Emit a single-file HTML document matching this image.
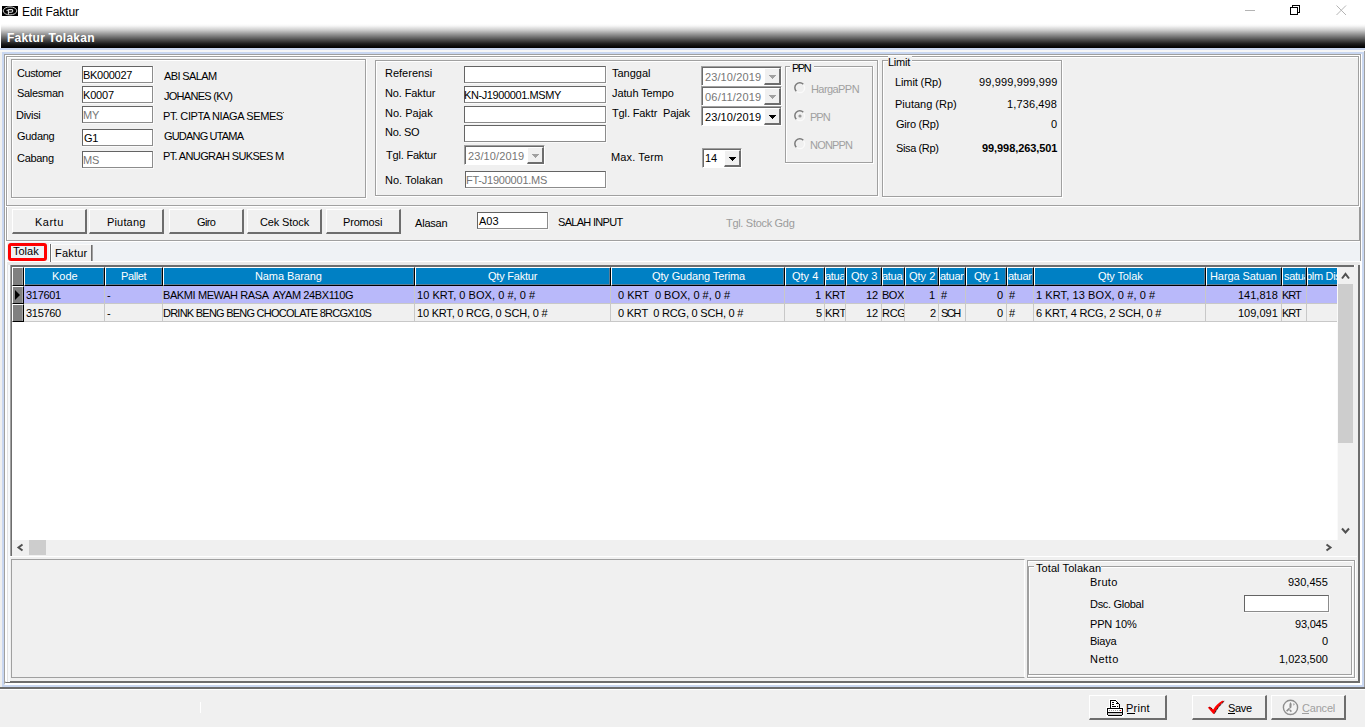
<!DOCTYPE html>
<html><head><meta charset="utf-8"><title>Edit Faktur</title>
<style>
html,body{margin:0;padding:0;}
body{width:1365px;height:727px;overflow:hidden;position:relative;background:#f0f0f0;font-family:"Liberation Sans",sans-serif;font-size:11px;color:#000;}
body div{position:absolute;white-space:nowrap;}
svg{display:block}
</style></head><body>
<div style="left:0px;top:0px;width:1365px;height:24px;background:#fff"></div>
<svg style="position:absolute;left:2px;top:6px" width="16" height="10" viewBox="0 0 16 10"><rect width="16" height="10" fill="#000"/><ellipse cx="8" cy="4.9" rx="6.8" ry="4" fill="none" stroke="#d0d0d0" stroke-width="1"/><path d="M4.6 4.6 L6.4 4 L6.4 8.6 M6.4 3.6 H9.8 Q11 3.8 10.6 5.4 Q10.2 6.4 8.6 6.2 H6.6" fill="none" stroke="#e0e0e0" stroke-width="1.1"/></svg>
<div style="left:22px;top:5px;font-size:12px;line-height:15px;letter-spacing:-0.1px;color:#000;white-space:pre;">Edit Faktur</div>
<div style="left:1245px;top:10px;width:10px;height:1px;background:#b4b4b4"></div>
<svg style="position:absolute;left:1289px;top:4px" width="13" height="12" viewBox="0 0 13 12" shape-rendering="crispEdges"><rect x="1.5" y="3.5" width="7" height="7" fill="none" stroke="#000" stroke-width="1"/><path d="M3.5 3.5 V1.5 H10.5 V8.5 H8.5" fill="none" stroke="#000" stroke-width="1"/></svg>
<svg style="position:absolute;left:1336px;top:5px" width="11" height="11" viewBox="0 0 11 11"><path d="M0.5 0.5 L10 10 M10 0.5 L0.5 10" stroke="#b4b4b4" stroke-width="1"/></svg>
<div style="left:0px;top:24px;width:1px;height:24px;background:#fff"></div>
<div style="left:1px;top:24px;width:1364px;height:24px;background:linear-gradient(to bottom,#ffffff 0%,#f6f6f6 8%,#cdcdcd 25%,#8e8e8e 45%,#505050 65%,#1e1e1e 82%,#080808 94%,#000 100%)"></div>
<div style="left:7px;top:31px;font-size:12px;line-height:15px;letter-spacing:0.231px;color:#fff;white-space:pre;font-weight:bold;">Faktur Tolakan</div>
<div style="left:0px;top:48px;width:1365px;height:2px;background:#c9d7f1"></div>
<div style="left:0px;top:50px;width:1365px;height:2px;background:#f6f6f6"></div>
<div style="left:2px;top:52px;width:1362px;height:635px;border-top:2px solid #c9d7f1;border-left:2px solid #c9d7f1;border-bottom:2px solid #c9d7f1;border-right:2px solid #c9d7f1;box-sizing:border-box"></div>
<div style="left:1364px;top:51px;width:1px;height:637px;background:#a0a0a0"></div>
<div style="left:0px;top:687px;width:1365px;height:2px;background:#6d6d6d"></div>
<div style="left:0px;top:689px;width:1365px;height:1px;background:#fff"></div>
<div style="left:4px;top:54px;width:1358px;height:631px;border-top:1px solid #a0a0a0;border-left:1px solid #a0a0a0;border-bottom:2px solid #fff;border-right:1px solid #fff;box-sizing:border-box"></div>
<div style="left:5px;top:55px;width:1356px;height:628px;border-top:1px solid #fff;border-left:1px solid #fff;border-bottom:2px solid #6d6d6d;box-sizing:border-box"></div>
<div style="left:1360px;top:54px;width:1px;height:153px;background:#a0a0a0"></div>
<div style="left:1361px;top:54px;width:1px;height:153px;background:#fff"></div>
<div style="left:1359px;top:56px;width:1px;height:151px;background:#fff"></div>
<div style="left:1359px;top:207px;width:2px;height:54px;background:#999"></div>
<div style="left:1361px;top:207px;width:1px;height:54px;background:#fff"></div>
<div style="left:1358px;top:261px;width:2px;height:422px;background:#6d6d6d"></div>
<div style="left:1360px;top:261px;width:2px;height:424px;background:#fff"></div>
<div style="left:6px;top:56px;width:1353px;height:185px;border-top:1px solid #a0a0a0;border-left:1px solid #a0a0a0;box-sizing:border-box"></div>
<div style="left:7px;top:57px;width:1352px;height:184px;border-top:1px solid #fff;border-left:1px solid #fff;box-sizing:border-box"></div>
<div style="left:6px;top:241px;width:1px;height:441px;background:#fff"></div>
<div style="left:7px;top:262px;width:1px;height:420px;background:#e3e3e3"></div>
<div style="left:8px;top:262px;width:2px;height:420px;background:#f7f9fc"></div>
<div style="left:6px;top:205px;width:1353px;height:1px;background:#a0a0a0"></div>
<div style="left:6px;top:206px;width:1353px;height:1px;background:#fff"></div>
<div style="left:1358px;top:56px;width:1px;height:150px;background:#a0a0a0"></div>
<div style="left:11px;top:59px;width:355px;height:139px;border:1px solid #a0a0a0;box-sizing:border-box"></div>
<div style="left:12px;top:60px;width:353px;height:137px;border-top:1px solid #fff;border-left:1px solid #fff;box-sizing:border-box"></div>
<div style="left:11px;top:198px;width:356px;height:1px;background:#fff"></div>
<div style="left:366px;top:59px;width:1px;height:140px;background:#fff"></div>
<div style="left:17px;top:67px;font-size:11px;line-height:13px;letter-spacing:-0.429px;color:#000;white-space:pre;">Customer</div>
<div style="left:17px;top:87px;font-size:11px;line-height:13px;letter-spacing:-0.3px;color:#000;white-space:pre;">Salesman</div>
<div style="left:16px;top:109px;font-size:11px;line-height:13px;letter-spacing:-0.3px;color:#000;white-space:pre;">Divisi</div>
<div style="left:17px;top:130px;font-size:11px;line-height:13px;letter-spacing:-0.3px;color:#000;white-space:pre;">Gudang</div>
<div style="left:17px;top:152px;font-size:11px;line-height:13px;letter-spacing:-0.3px;color:#000;white-space:pre;">Cabang</div>
<div style="left:82px;top:66px;width:71px;height:17px;background:#fff;border-top:1px solid #646464;border-left:1px solid #646464;border-right:1px solid #8c8c8c;border-bottom:1px solid #8c8c8c;box-sizing:border-box"></div>
<div style="left:153px;top:66px;width:1px;height:18px;background:#fafafa"></div>
<div style="left:82px;top:83px;width:71px;height:1px;background:#fafafa"></div>
<div style="left:83px;top:69px;font-size:11px;line-height:13px;letter-spacing:-0.286px;color:#000;white-space:pre;">BK000027</div>
<div style="left:82px;top:86px;width:71px;height:17px;background:#fff;border-top:1px solid #646464;border-left:1px solid #646464;border-right:1px solid #8c8c8c;border-bottom:1px solid #8c8c8c;box-sizing:border-box"></div>
<div style="left:153px;top:86px;width:1px;height:18px;background:#fafafa"></div>
<div style="left:82px;top:103px;width:71px;height:1px;background:#fafafa"></div>
<div style="left:83px;top:89px;font-size:11px;line-height:13px;letter-spacing:-0.2px;color:#000;white-space:pre;">K0007</div>
<div style="left:82px;top:106px;width:71px;height:17px;background:#fff;border-top:1px solid #646464;border-left:1px solid #646464;border-right:1px solid #8c8c8c;border-bottom:1px solid #8c8c8c;box-sizing:border-box"></div>
<div style="left:153px;top:106px;width:1px;height:18px;background:#fafafa"></div>
<div style="left:82px;top:123px;width:71px;height:1px;background:#fafafa"></div>
<div style="left:83px;top:109px;font-size:11px;line-height:13px;letter-spacing:-0.2px;color:#767676;white-space:pre;">MY</div>
<div style="left:82px;top:129px;width:71px;height:17px;background:#fff;border-top:1px solid #646464;border-left:1px solid #646464;border-right:1px solid #8c8c8c;border-bottom:1px solid #8c8c8c;box-sizing:border-box"></div>
<div style="left:153px;top:129px;width:1px;height:18px;background:#fafafa"></div>
<div style="left:82px;top:146px;width:71px;height:1px;background:#fafafa"></div>
<div style="left:84px;top:132px;font-size:11px;line-height:13px;letter-spacing:-0.2px;color:#000;white-space:pre;">G1</div>
<div style="left:82px;top:151px;width:71px;height:17px;background:#fff;border-top:1px solid #646464;border-left:1px solid #646464;border-right:1px solid #8c8c8c;border-bottom:1px solid #8c8c8c;box-sizing:border-box"></div>
<div style="left:153px;top:151px;width:1px;height:18px;background:#fafafa"></div>
<div style="left:82px;top:168px;width:71px;height:1px;background:#fafafa"></div>
<div style="left:83px;top:154px;font-size:11px;line-height:13px;letter-spacing:-0.2px;color:#767676;white-space:pre;">MS</div>
<div style="left:163px;top:69px;width:121px;height:14px;overflow:hidden"><div style="left:1px;top:1px;font-size:11px;line-height:13px;letter-spacing:-0.625px;color:#000;white-space:pre;">ABI SALAM</div></div>
<div style="left:163px;top:89px;width:121px;height:14px;overflow:hidden"><div style="left:1px;top:1px;font-size:11px;line-height:13px;letter-spacing:-0.727px;color:#000;white-space:pre;">JOHANES (KV)</div></div>
<div style="left:163px;top:109px;width:121px;height:14px;overflow:hidden"><div style="left:0px;top:1px;font-size:11px;line-height:13px;letter-spacing:-0.4px;color:#000;white-space:pre;">PT. CIPTA NIAGA SEMESTA</div></div>
<div style="left:163px;top:129px;width:121px;height:14px;overflow:hidden"><div style="left:1px;top:1px;font-size:11px;line-height:13px;letter-spacing:-0.818px;color:#000;white-space:pre;">GUDANG UTAMA</div></div>
<div style="left:163px;top:149px;width:121px;height:14px;overflow:hidden"><div style="left:0px;top:1px;font-size:11px;line-height:13px;letter-spacing:-0.632px;color:#000;white-space:pre;">PT. ANUGRAH SUKSES MANDIRI</div></div>
<div style="left:375px;top:60px;width:503px;height:136px;border:1px solid #a0a0a0;box-sizing:border-box"></div>
<div style="left:376px;top:61px;width:501px;height:134px;border-top:1px solid #fff;border-left:1px solid #fff;box-sizing:border-box"></div>
<div style="left:375px;top:196px;width:504px;height:1px;background:#fff"></div>
<div style="left:878px;top:60px;width:1px;height:137px;background:#fff"></div>
<div style="left:385px;top:67px;font-size:11px;line-height:13px;letter-spacing:0.0px;color:#000;white-space:pre;">Referensi</div>
<div style="left:385px;top:87px;font-size:11px;line-height:13px;letter-spacing:-0.111px;color:#000;white-space:pre;">No. Faktur</div>
<div style="left:385px;top:107px;font-size:11px;line-height:13px;letter-spacing:0.0px;color:#000;white-space:pre;">No. Pajak</div>
<div style="left:385px;top:126px;font-size:11px;line-height:13px;letter-spacing:-0.3px;color:#000;white-space:pre;">No. SO</div>
<div style="left:386px;top:149px;font-size:11px;line-height:13px;letter-spacing:-0.2px;color:#000;white-space:pre;">Tgl. Faktur</div>
<div style="left:385px;top:174px;font-size:11px;line-height:13px;letter-spacing:0.0px;color:#000;white-space:pre;">No. Tolakan</div>
<div style="left:464px;top:66px;width:142px;height:17px;background:#fff;border-top:1px solid #646464;border-left:1px solid #646464;border-right:1px solid #8c8c8c;border-bottom:1px solid #8c8c8c;box-sizing:border-box"></div>
<div style="left:606px;top:66px;width:1px;height:18px;background:#fafafa"></div>
<div style="left:464px;top:83px;width:142px;height:1px;background:#fafafa"></div>
<div style="left:464px;top:86px;width:142px;height:17px;background:#fff;border-top:1px solid #646464;border-left:1px solid #646464;border-right:1px solid #8c8c8c;border-bottom:1px solid #8c8c8c;box-sizing:border-box"></div>
<div style="left:606px;top:86px;width:1px;height:18px;background:#fafafa"></div>
<div style="left:464px;top:103px;width:142px;height:1px;background:#fafafa"></div>
<div style="left:464px;top:89px;font-size:11px;line-height:13px;letter-spacing:-0.4px;color:#000;white-space:pre;">KN-J1900001.MSMY</div>
<div style="left:464px;top:106px;width:142px;height:17px;background:#fff;border-top:1px solid #646464;border-left:1px solid #646464;border-right:1px solid #8c8c8c;border-bottom:1px solid #8c8c8c;box-sizing:border-box"></div>
<div style="left:606px;top:106px;width:1px;height:18px;background:#fafafa"></div>
<div style="left:464px;top:123px;width:142px;height:1px;background:#fafafa"></div>
<div style="left:464px;top:125px;width:142px;height:17px;background:#fff;border-top:1px solid #646464;border-left:1px solid #646464;border-right:1px solid #8c8c8c;border-bottom:1px solid #8c8c8c;box-sizing:border-box"></div>
<div style="left:606px;top:125px;width:1px;height:18px;background:#fafafa"></div>
<div style="left:464px;top:142px;width:142px;height:1px;background:#fafafa"></div>
<div style="left:465px;top:171px;width:141px;height:17px;background:#fff;border-top:1px solid #646464;border-left:1px solid #646464;border-right:1px solid #8c8c8c;border-bottom:1px solid #8c8c8c;box-sizing:border-box"></div>
<div style="left:606px;top:171px;width:1px;height:18px;background:#fafafa"></div>
<div style="left:465px;top:188px;width:141px;height:1px;background:#fafafa"></div>
<div style="left:466px;top:174px;font-size:11px;line-height:13px;letter-spacing:-0.231px;color:#767676;white-space:pre;">FT-J1900001.MS</div>
<div style="left:464px;top:145px;width:81px;height:20px;background:#fff;border-top:1px solid #a0a0a0;border-left:1px solid #a0a0a0;border-right:1px solid #fff;border-bottom:1px solid #fff;box-sizing:border-box"></div>
<div style="left:465px;top:146px;width:79px;height:18px;border-top:1px solid #696969;border-left:1px solid #696969;box-sizing:border-box"></div>
<div style="left:527px;top:147px;width:17px;height:17px;background:#f0f0f0;border-top:1px solid #fff;border-left:1px solid #fff;border-right:2px solid #6d6d6d;border-bottom:2px solid #6d6d6d;box-sizing:border-box"></div>
<svg style="position:absolute;left:532px;top:154px" width="7" height="4" shape-rendering="crispEdges"><path d="M0 0 H7 V1 H6 V2 H5 V3 H4 V4 H3 V3 H2 V2 H1 V1 H0 Z" fill="#a0a0a0"/></svg>
<div style="left:468px;top:150px;font-size:11px;line-height:13px;letter-spacing:0.111px;color:#767676;white-space:pre;">23/10/2019</div>
<div style="left:612px;top:67px;font-size:11px;line-height:13px;letter-spacing:0.0px;color:#000;white-space:pre;">Tanggal</div>
<div style="left:612px;top:87px;font-size:11px;line-height:13px;letter-spacing:-0.1px;color:#000;white-space:pre;">Jatuh Tempo</div>
<div style="left:612px;top:107px;font-size:11px;line-height:13px;letter-spacing:-0.125px;color:#000;white-space:pre;">Tgl. Faktr  Pajak</div>
<div style="left:611px;top:151px;font-size:11px;line-height:13px;letter-spacing:0.125px;color:#000;white-space:pre;">Max. Term</div>
<div style="left:701px;top:66px;width:81px;height:20px;background:#fff;border-top:1px solid #a0a0a0;border-left:1px solid #a0a0a0;border-right:1px solid #fff;border-bottom:1px solid #fff;box-sizing:border-box"></div>
<div style="left:702px;top:67px;width:79px;height:18px;border-top:1px solid #696969;border-left:1px solid #696969;box-sizing:border-box"></div>
<div style="left:764px;top:68px;width:17px;height:17px;background:#f0f0f0;border-top:1px solid #fff;border-left:1px solid #fff;border-right:2px solid #6d6d6d;border-bottom:2px solid #6d6d6d;box-sizing:border-box"></div>
<svg style="position:absolute;left:769px;top:75px" width="7" height="4" shape-rendering="crispEdges"><path d="M0 0 H7 V1 H6 V2 H5 V3 H4 V4 H3 V3 H2 V2 H1 V1 H0 Z" fill="#a0a0a0"/></svg>
<div style="left:705px;top:71px;font-size:11px;line-height:13px;letter-spacing:0.111px;color:#767676;white-space:pre;">23/10/2019</div>
<div style="left:701px;top:86px;width:81px;height:20px;background:#fff;border-top:1px solid #a0a0a0;border-left:1px solid #a0a0a0;border-right:1px solid #fff;border-bottom:1px solid #fff;box-sizing:border-box"></div>
<div style="left:702px;top:87px;width:79px;height:18px;border-top:1px solid #696969;border-left:1px solid #696969;box-sizing:border-box"></div>
<div style="left:764px;top:88px;width:17px;height:17px;background:#f0f0f0;border-top:1px solid #fff;border-left:1px solid #fff;border-right:2px solid #6d6d6d;border-bottom:2px solid #6d6d6d;box-sizing:border-box"></div>
<svg style="position:absolute;left:769px;top:95px" width="7" height="4" shape-rendering="crispEdges"><path d="M0 0 H7 V1 H6 V2 H5 V3 H4 V4 H3 V3 H2 V2 H1 V1 H0 Z" fill="#a0a0a0"/></svg>
<div style="left:705px;top:91px;font-size:11px;line-height:13px;letter-spacing:0.222px;color:#767676;white-space:pre;">06/11/2019</div>
<div style="left:701px;top:106px;width:81px;height:20px;background:#fff;border-top:1px solid #a0a0a0;border-left:1px solid #a0a0a0;border-right:1px solid #fff;border-bottom:1px solid #fff;box-sizing:border-box"></div>
<div style="left:702px;top:107px;width:79px;height:18px;border-top:1px solid #696969;border-left:1px solid #696969;box-sizing:border-box"></div>
<div style="left:764px;top:108px;width:17px;height:17px;background:#f0f0f0;border-top:1px solid #fff;border-left:1px solid #fff;border-right:2px solid #6d6d6d;border-bottom:2px solid #6d6d6d;box-sizing:border-box"></div>
<svg style="position:absolute;left:769px;top:115px" width="7" height="4" shape-rendering="crispEdges"><path d="M0 0 H7 V1 H6 V2 H5 V3 H4 V4 H3 V3 H2 V2 H1 V1 H0 Z" fill="#000"/></svg>
<div style="left:705px;top:111px;font-size:11px;line-height:13px;letter-spacing:0.111px;color:#000;white-space:pre;">23/10/2019</div>
<div style="left:702px;top:148px;width:40px;height:20px;background:#fff;border-top:1px solid #a0a0a0;border-left:1px solid #a0a0a0;border-right:1px solid #fff;border-bottom:1px solid #fff;box-sizing:border-box"></div>
<div style="left:703px;top:149px;width:38px;height:18px;border-top:1px solid #696969;border-left:1px solid #696969;box-sizing:border-box"></div>
<div style="left:724px;top:150px;width:17px;height:17px;background:#f0f0f0;border-top:1px solid #fff;border-left:1px solid #fff;border-right:2px solid #6d6d6d;border-bottom:2px solid #6d6d6d;box-sizing:border-box"></div>
<svg style="position:absolute;left:729px;top:157px" width="7" height="4" shape-rendering="crispEdges"><path d="M0 0 H7 V1 H6 V2 H5 V3 H4 V4 H3 V3 H2 V2 H1 V1 H0 Z" fill="#000"/></svg>
<div style="left:705px;top:152px;font-size:11px;line-height:13px;letter-spacing:0.0px;color:#000;white-space:pre;">14</div>
<div style="left:785px;top:66px;width:88px;height:97px;border:1px solid #a0a0a0;box-sizing:border-box"></div>
<div style="left:786px;top:67px;width:86px;height:95px;border-top:1px solid #fff;border-left:1px solid #fff;box-sizing:border-box"></div>
<div style="left:785px;top:163px;width:89px;height:1px;background:#fff"></div>
<div style="left:873px;top:66px;width:1px;height:98px;background:#fff"></div>
<div style="left:790px;top:62px;width:24px;height:10px;background:#f0f0f0"></div>
<div style="left:792px;top:62px;font-size:11px;line-height:13px;letter-spacing:-1.5px;color:#000;white-space:pre;">PPN</div>
<svg style="position:absolute;left:793px;top:81px" width="14" height="14" viewBox="0 0 14 14"><circle cx="7" cy="7" r="4.6" fill="none" stroke="#fafafa" stroke-width="1.4"/><path d="M3.3 10.3 A4.7 4.7 0 0 1 10.3 3.3" fill="none" stroke="#7a7a7a" stroke-width="1.5"/></svg>
<div style="left:811px;top:83px;font-size:11px;line-height:13px;letter-spacing:-0.571px;color:#a0a0a0;white-space:pre;">HargaPPN</div>
<svg style="position:absolute;left:793px;top:109px" width="14" height="14" viewBox="0 0 14 14"><circle cx="7" cy="7" r="4.6" fill="none" stroke="#fafafa" stroke-width="1.4"/><path d="M3.3 10.3 A4.7 4.7 0 0 1 10.3 3.3" fill="none" stroke="#7a7a7a" stroke-width="1.5"/><circle cx="7" cy="7" r="1.6" fill="#9a9a9a"/></svg>
<div style="left:810px;top:111px;font-size:11px;line-height:13px;letter-spacing:-1.0px;color:#a0a0a0;white-space:pre;">PPN</div>
<svg style="position:absolute;left:793px;top:137px" width="14" height="14" viewBox="0 0 14 14"><circle cx="7" cy="7" r="4.6" fill="none" stroke="#fafafa" stroke-width="1.4"/><path d="M3.3 10.3 A4.7 4.7 0 0 1 10.3 3.3" fill="none" stroke="#7a7a7a" stroke-width="1.5"/></svg>
<div style="left:810px;top:139px;font-size:11px;line-height:13px;letter-spacing:-0.8px;color:#a0a0a0;white-space:pre;">NONPPN</div>
<div style="left:882px;top:60px;width:180px;height:137px;border:1px solid #a0a0a0;box-sizing:border-box"></div>
<div style="left:883px;top:61px;width:178px;height:135px;border-top:1px solid #fff;border-left:1px solid #fff;box-sizing:border-box"></div>
<div style="left:882px;top:197px;width:181px;height:1px;background:#fff"></div>
<div style="left:1062px;top:60px;width:1px;height:138px;background:#fff"></div>
<div style="left:888px;top:56px;width:24px;height:10px;background:#f0f0f0"></div>
<div style="left:888px;top:56px;font-size:11px;line-height:13px;letter-spacing:-0.25px;color:#000;white-space:pre;">Limit</div>
<div style="left:895px;top:76px;font-size:11px;line-height:13px;letter-spacing:-0.111px;color:#000;white-space:pre;">Limit (Rp)</div>
<div style="left:979px;top:76px;font-size:11px;line-height:13px;letter-spacing:0.154px;color:#000;white-space:pre;">99,999,999,999</div>
<div style="left:895px;top:98px;font-size:11px;line-height:13px;letter-spacing:0.0px;color:#000;white-space:pre;">Piutang (Rp)</div>
<div style="left:1007px;top:98px;font-size:11px;line-height:13px;letter-spacing:0.125px;color:#000;white-space:pre;">1,736,498</div>
<div style="left:896px;top:118px;font-size:11px;line-height:13px;letter-spacing:-0.25px;color:#000;white-space:pre;">Giro (Rp)</div>
<div style="left:1051px;top:118px;font-size:11px;line-height:13px;letter-spacing:-0.3px;color:#000;white-space:pre;">0</div>
<div style="left:896px;top:142px;font-size:11px;line-height:13px;letter-spacing:-0.375px;color:#000;white-space:pre;">Sisa (Rp)</div>
<div style="left:982px;top:142px;font-size:11px;line-height:13px;letter-spacing:-0.077px;color:#000;white-space:pre;font-weight:bold;">99,998,263,501</div>
<div style="left:12px;top:209px;width:75px;height:25px;background:#f0f0f0;border-top:1px solid #fff;border-left:1px solid #fff;border-right:2px solid #6d6d6d;border-bottom:2px solid #6d6d6d;box-sizing:border-box"></div>
<div style="left:35px;top:216px;font-size:11px;line-height:13px;letter-spacing:0.5px;color:#000;white-space:pre;">Kartu</div>
<div style="left:89px;top:209px;width:75px;height:25px;background:#f0f0f0;border-top:1px solid #fff;border-left:1px solid #fff;border-right:2px solid #6d6d6d;border-bottom:2px solid #6d6d6d;box-sizing:border-box"></div>
<div style="left:107px;top:216px;font-size:11px;line-height:13px;letter-spacing:0.167px;color:#000;white-space:pre;">Piutang</div>
<div style="left:169px;top:209px;width:75px;height:25px;background:#f0f0f0;border-top:1px solid #fff;border-left:1px solid #fff;border-right:2px solid #6d6d6d;border-bottom:2px solid #6d6d6d;box-sizing:border-box"></div>
<div style="left:197px;top:216px;font-size:11px;line-height:13px;letter-spacing:-0.667px;color:#000;white-space:pre;">Giro</div>
<div style="left:247px;top:209px;width:75px;height:25px;background:#f0f0f0;border-top:1px solid #fff;border-left:1px solid #fff;border-right:2px solid #6d6d6d;border-bottom:2px solid #6d6d6d;box-sizing:border-box"></div>
<div style="left:260px;top:216px;font-size:11px;line-height:13px;letter-spacing:-0.125px;color:#000;white-space:pre;">Cek Stock</div>
<div style="left:326px;top:209px;width:75px;height:25px;background:#f0f0f0;border-top:1px solid #fff;border-left:1px solid #fff;border-right:2px solid #6d6d6d;border-bottom:2px solid #6d6d6d;box-sizing:border-box"></div>
<div style="left:343px;top:216px;font-size:11px;line-height:13px;letter-spacing:-0.167px;color:#000;white-space:pre;">Promosi</div>
<div style="left:415px;top:217px;font-size:11px;line-height:13px;letter-spacing:-0.2px;color:#000;white-space:pre;">Alasan</div>
<div style="left:477px;top:212px;width:71px;height:17px;background:#fff;border-top:1px solid #646464;border-left:1px solid #646464;border-right:1px solid #8c8c8c;border-bottom:1px solid #8c8c8c;box-sizing:border-box"></div>
<div style="left:548px;top:212px;width:1px;height:18px;background:#fafafa"></div>
<div style="left:477px;top:229px;width:71px;height:1px;background:#fafafa"></div>
<div style="left:479px;top:215px;font-size:11px;line-height:13px;letter-spacing:0.0px;color:#000;white-space:pre;">A03</div>
<div style="left:558px;top:216px;font-size:11px;line-height:13px;letter-spacing:-0.7px;color:#000;white-space:pre;">SALAH INPUT</div>
<div style="left:726px;top:217px;font-size:11px;line-height:13px;letter-spacing:-0.308px;color:#9c9c9c;white-space:pre;">Tgl. Stock Gdg</div>
<div style="left:6px;top:240px;width:1354px;height:1px;background:#a0a0a0"></div>
<div style="left:6px;top:241px;width:1354px;height:1px;background:#fff"></div>
<div style="left:7px;top:242px;width:1353px;height:19px;background:#eff2f5"></div>
<div style="left:7px;top:261px;width:1353px;height:1px;background:#fff"></div>
<div style="left:7px;top:262px;width:1353px;height:3px;background:#e9e9e9"></div>
<div style="left:8px;top:243px;width:39px;height:18px;border:3px solid #ff0000;border-radius:3px;box-sizing:border-box;background:#eff2f5"></div>
<div style="left:13px;top:245px;font-size:11px;line-height:13px;letter-spacing:0.0px;color:#000;white-space:pre;">Tolak</div>
<div style="left:51px;top:244px;width:40px;height:17px;background:#f0f0f0;border-top:1px solid #fafafa;box-sizing:border-box"></div>
<div style="left:49px;top:243px;width:1px;height:19px;background:#fff"></div>
<div style="left:50px;top:244px;width:1px;height:18px;background:#6d6d6d"></div>
<div style="left:51px;top:245px;width:1px;height:16px;background:#fff"></div>
<div style="left:91px;top:245px;width:1px;height:16px;background:#6d6d6d"></div>
<div style="left:92px;top:245px;width:1px;height:16px;background:#a0a0a0"></div>
<div style="left:55px;top:247px;font-size:11px;line-height:13px;letter-spacing:0.2px;color:#000;white-space:pre;">Faktur</div>
<div style="left:10px;top:265px;width:1345px;height:292px;border-top:2px solid #6d6d6d;border-left:2px solid #6d6d6d;box-sizing:border-box;background:#fff"></div>
<div style="left:10px;top:265px;width:1px;height:291px;background:#a0a0a0"></div>
<div style="left:1354px;top:265px;width:1px;height:292px;background:#fff"></div>
<div style="left:1355px;top:265px;width:3px;height:296px;background:#f0f0f0"></div>
<div style="left:12px;top:267px;width:12px;height:19px;background:#808080;border-top:1px solid #fff;border-left:1px solid #fff;border-right:1px solid #000;border-bottom:1px solid #000;box-sizing:border-box"></div>
<div style="left:12px;top:286px;width:12px;height:18px;background:#808080;border-top:1px solid #fff;border-left:1px solid #fff;border-right:1px solid #000;border-bottom:1px solid #000;box-sizing:border-box"></div>
<div style="left:12px;top:304px;width:12px;height:18px;background:#808080;border-top:1px solid #fff;border-left:1px solid #fff;border-right:1px solid #000;border-bottom:1px solid #000;box-sizing:border-box"></div>
<div style="left:22px;top:268px;width:1px;height:17px;background:#a8a8a8"></div>
<div style="left:22px;top:287px;width:1px;height:16px;background:#a8a8a8"></div>
<div style="left:22px;top:305px;width:1px;height:16px;background:#a8a8a8"></div>
<svg style="position:absolute;left:15px;top:290px" width="6" height="10"><path d="M0 0 L5 5 L0 10 Z" fill="#000"/></svg>
<div style="left:24px;top:267px;width:81px;height:19px;background:#0080c4;border-top:1px solid #fff;border-left:1px solid #fff;border-right:1px solid #000;border-bottom:1px solid #000;box-sizing:border-box;"></div>
<div style="left:25px;top:284px;width:79px;height:1px;background:#5a7d96"></div>
<div style="left:103px;top:268px;width:1px;height:17px;background:#5a7d96"></div>
<div style="left:25px;top:268px;width:78px;height:16px;overflow:hidden"><div style="left:27px;top:2px;font-size:11px;line-height:13px;letter-spacing:0.0px;color:#fff;white-space:pre;">Kode</div></div>
<div style="left:105px;top:267px;width:58px;height:19px;background:#0080c4;border-top:1px solid #fff;border-left:1px solid #fff;border-right:1px solid #000;border-bottom:1px solid #000;box-sizing:border-box;"></div>
<div style="left:106px;top:284px;width:56px;height:1px;background:#5a7d96"></div>
<div style="left:161px;top:268px;width:1px;height:17px;background:#5a7d96"></div>
<div style="left:106px;top:268px;width:55px;height:16px;overflow:hidden"><div style="left:15px;top:2px;font-size:11px;line-height:13px;letter-spacing:-0.4px;color:#fff;white-space:pre;">Pallet</div></div>
<div style="left:163px;top:267px;width:252px;height:19px;background:#0080c4;border-top:1px solid #fff;border-left:1px solid #fff;border-right:1px solid #000;border-bottom:1px solid #000;box-sizing:border-box;"></div>
<div style="left:164px;top:284px;width:250px;height:1px;background:#5a7d96"></div>
<div style="left:413px;top:268px;width:1px;height:17px;background:#5a7d96"></div>
<div style="left:164px;top:268px;width:249px;height:16px;overflow:hidden"><div style="left:91px;top:2px;font-size:11px;line-height:13px;letter-spacing:-0.1px;color:#fff;white-space:pre;">Nama Barang</div></div>
<div style="left:415px;top:267px;width:196px;height:19px;background:#0080c4;border-top:1px solid #fff;border-left:1px solid #fff;border-right:1px solid #000;border-bottom:1px solid #000;box-sizing:border-box;"></div>
<div style="left:416px;top:284px;width:194px;height:1px;background:#5a7d96"></div>
<div style="left:609px;top:268px;width:1px;height:17px;background:#5a7d96"></div>
<div style="left:416px;top:268px;width:193px;height:16px;overflow:hidden"><div style="left:72px;top:2px;font-size:11px;line-height:13px;letter-spacing:-0.222px;color:#fff;white-space:pre;">Qty Faktur</div></div>
<div style="left:611px;top:267px;width:174px;height:19px;background:#0080c4;border-top:1px solid #fff;border-left:1px solid #fff;border-right:1px solid #000;border-bottom:1px solid #000;box-sizing:border-box;"></div>
<div style="left:612px;top:284px;width:172px;height:1px;background:#5a7d96"></div>
<div style="left:783px;top:268px;width:1px;height:17px;background:#5a7d96"></div>
<div style="left:612px;top:268px;width:171px;height:16px;overflow:hidden"><div style="left:40px;top:2px;font-size:11px;line-height:13px;letter-spacing:-0.125px;color:#fff;white-space:pre;">Qty Gudang Terima</div></div>
<div style="left:785px;top:267px;width:40px;height:19px;background:#0080c4;border-top:1px solid #fff;border-left:1px solid #fff;border-right:1px solid #000;border-bottom:1px solid #000;box-sizing:border-box;"></div>
<div style="left:786px;top:284px;width:38px;height:1px;background:#5a7d96"></div>
<div style="left:823px;top:268px;width:1px;height:17px;background:#5a7d96"></div>
<div style="left:786px;top:268px;width:37px;height:16px;overflow:hidden"><div style="left:6px;top:2px;font-size:11px;line-height:13px;letter-spacing:0.0px;color:#fff;white-space:pre;">Qty 4</div></div>
<div style="left:825px;top:267px;width:21px;height:19px;background:#0080c4;border-top:1px solid #fff;border-left:1px solid #fff;border-right:1px solid #000;border-bottom:1px solid #000;box-sizing:border-box;"></div>
<div style="left:826px;top:284px;width:19px;height:1px;background:#5a7d96"></div>
<div style="left:844px;top:268px;width:1px;height:17px;background:#5a7d96"></div>
<div style="left:826px;top:268px;width:18px;height:16px;overflow:hidden"><div style="left:-8px;top:2px;font-size:11px;line-height:13px;letter-spacing:-0.3px;color:#fff;white-space:pre;">Satuan</div></div>
<div style="left:846px;top:267px;width:36px;height:19px;background:#0080c4;border-top:1px solid #fff;border-left:1px solid #fff;border-right:1px solid #000;border-bottom:1px solid #000;box-sizing:border-box;"></div>
<div style="left:847px;top:284px;width:34px;height:1px;background:#5a7d96"></div>
<div style="left:880px;top:268px;width:1px;height:17px;background:#5a7d96"></div>
<div style="left:847px;top:268px;width:33px;height:16px;overflow:hidden"><div style="left:4px;top:2px;font-size:11px;line-height:13px;letter-spacing:0.0px;color:#fff;white-space:pre;">Qty 3</div></div>
<div style="left:882px;top:267px;width:23px;height:19px;background:#0080c4;border-top:1px solid #fff;border-left:1px solid #fff;border-right:1px solid #000;border-bottom:1px solid #000;box-sizing:border-box;"></div>
<div style="left:883px;top:284px;width:21px;height:1px;background:#5a7d96"></div>
<div style="left:903px;top:268px;width:1px;height:17px;background:#5a7d96"></div>
<div style="left:883px;top:268px;width:20px;height:16px;overflow:hidden"><div style="left:-8px;top:2px;font-size:11px;line-height:13px;letter-spacing:-0.3px;color:#fff;white-space:pre;">Satuan</div></div>
<div style="left:905px;top:267px;width:34px;height:19px;background:#0080c4;border-top:1px solid #fff;border-left:1px solid #fff;border-right:1px solid #000;border-bottom:1px solid #000;box-sizing:border-box;"></div>
<div style="left:906px;top:284px;width:32px;height:1px;background:#5a7d96"></div>
<div style="left:937px;top:268px;width:1px;height:17px;background:#5a7d96"></div>
<div style="left:906px;top:268px;width:31px;height:16px;overflow:hidden"><div style="left:3px;top:2px;font-size:11px;line-height:13px;letter-spacing:0.0px;color:#fff;white-space:pre;">Qty 2</div></div>
<div style="left:939px;top:267px;width:27px;height:19px;background:#0080c4;border-top:1px solid #fff;border-left:1px solid #fff;border-right:1px solid #000;border-bottom:1px solid #000;box-sizing:border-box;"></div>
<div style="left:940px;top:284px;width:25px;height:1px;background:#5a7d96"></div>
<div style="left:964px;top:268px;width:1px;height:17px;background:#5a7d96"></div>
<div style="left:940px;top:268px;width:24px;height:16px;overflow:hidden"><div style="left:-7px;top:2px;font-size:11px;line-height:13px;letter-spacing:-0.3px;color:#fff;white-space:pre;">Satuan</div></div>
<div style="left:966px;top:267px;width:41px;height:19px;background:#0080c4;border-top:1px solid #fff;border-left:1px solid #fff;border-right:1px solid #000;border-bottom:1px solid #000;box-sizing:border-box;"></div>
<div style="left:967px;top:284px;width:39px;height:1px;background:#5a7d96"></div>
<div style="left:1005px;top:268px;width:1px;height:17px;background:#5a7d96"></div>
<div style="left:967px;top:268px;width:38px;height:16px;overflow:hidden"><div style="left:7px;top:2px;font-size:11px;line-height:13px;letter-spacing:-0.25px;color:#fff;white-space:pre;">Qty 1</div></div>
<div style="left:1007px;top:267px;width:27px;height:19px;background:#0080c4;border-top:1px solid #fff;border-left:1px solid #fff;border-right:1px solid #000;border-bottom:1px solid #000;box-sizing:border-box;"></div>
<div style="left:1008px;top:284px;width:25px;height:1px;background:#5a7d96"></div>
<div style="left:1032px;top:268px;width:1px;height:17px;background:#5a7d96"></div>
<div style="left:1008px;top:268px;width:24px;height:16px;overflow:hidden"><div style="left:-7px;top:2px;font-size:11px;line-height:13px;letter-spacing:-0.3px;color:#fff;white-space:pre;">Satuan</div></div>
<div style="left:1034px;top:267px;width:172px;height:19px;background:#0080c4;border-top:1px solid #fff;border-left:1px solid #fff;border-right:1px solid #000;border-bottom:1px solid #000;box-sizing:border-box;"></div>
<div style="left:1035px;top:284px;width:170px;height:1px;background:#5a7d96"></div>
<div style="left:1204px;top:268px;width:1px;height:17px;background:#5a7d96"></div>
<div style="left:1035px;top:268px;width:169px;height:16px;overflow:hidden"><div style="left:63px;top:2px;font-size:11px;line-height:13px;letter-spacing:-0.125px;color:#fff;white-space:pre;">Qty Tolak</div></div>
<div style="left:1206px;top:267px;width:76px;height:19px;background:#0080c4;border-top:1px solid #fff;border-left:1px solid #fff;border-right:1px solid #000;border-bottom:1px solid #000;box-sizing:border-box;"></div>
<div style="left:1207px;top:284px;width:74px;height:1px;background:#5a7d96"></div>
<div style="left:1280px;top:268px;width:1px;height:17px;background:#5a7d96"></div>
<div style="left:1207px;top:268px;width:73px;height:16px;overflow:hidden"><div style="left:3px;top:2px;font-size:11px;line-height:13px;letter-spacing:-0.091px;color:#fff;white-space:pre;">Harga Satuan</div></div>
<div style="left:1282px;top:267px;width:25px;height:19px;background:#0080c4;border-top:1px solid #fff;border-left:1px solid #fff;border-right:1px solid #000;border-bottom:1px solid #000;box-sizing:border-box;"></div>
<div style="left:1283px;top:284px;width:23px;height:1px;background:#5a7d96"></div>
<div style="left:1305px;top:268px;width:1px;height:17px;background:#5a7d96"></div>
<div style="left:1283px;top:268px;width:22px;height:16px;overflow:hidden"><div style="left:1px;top:2px;font-size:11px;line-height:13px;letter-spacing:-0.3px;color:#fff;white-space:pre;">satuan</div></div>
<div style="left:1307px;top:267px;width:30px;height:19px;background:#0080c4;border-top:1px solid #fff;border-left:1px solid #fff;border-bottom:1px solid #000;box-sizing:border-box;"></div>
<div style="left:1308px;top:284px;width:29px;height:1px;background:#5a7d96"></div>
<div style="left:1308px;top:268px;width:29px;height:16px;overflow:hidden"><div style="left:-2px;top:2px;font-size:11px;line-height:13px;letter-spacing:-0.3px;color:#fff;white-space:pre;">blm Disc</div></div>
<div style="left:24px;top:286px;width:1313px;height:18px;background:#b9b9fa"></div>
<div style="left:24px;top:303px;width:1313px;height:1px;background:#c8c8c8"></div>
<div style="left:104px;top:286px;width:1px;height:18px;background:#c8c8c8"></div>
<div style="left:24px;top:286px;width:80px;height:17px;overflow:hidden"><div style="left:2px;top:3px;font-size:11px;line-height:13px;letter-spacing:-0.3px;color:#000;white-space:pre;">317601</div></div>
<div style="left:162px;top:286px;width:1px;height:18px;background:#c8c8c8"></div>
<div style="left:105px;top:286px;width:57px;height:17px;overflow:hidden"><div style="left:2px;top:3px;font-size:11px;line-height:13px;letter-spacing:-0.3px;color:#000;white-space:pre;">-</div></div>
<div style="left:414px;top:286px;width:1px;height:18px;background:#c8c8c8"></div>
<div style="left:163px;top:286px;width:251px;height:17px;overflow:hidden"><div style="left:0px;top:3px;font-size:11px;line-height:13px;letter-spacing:-0.4px;color:#000;white-space:pre;">BAKMI MEWAH RASA  AYAM 24BX110G</div></div>
<div style="left:610px;top:286px;width:1px;height:18px;background:#c8c8c8"></div>
<div style="left:415px;top:286px;width:195px;height:17px;overflow:hidden"><div style="left:2px;top:3px;font-size:11px;line-height:13px;letter-spacing:0.045px;color:#000;white-space:pre;">10 KRT, 0 BOX, 0 #, 0 #</div></div>
<div style="left:784px;top:286px;width:1px;height:18px;background:#c8c8c8"></div>
<div style="left:611px;top:286px;width:173px;height:17px;overflow:hidden"><div style="left:7px;top:3px;font-size:11px;line-height:13px;letter-spacing:0.0px;color:#000;white-space:pre;">0 KRT  0 BOX, 0 #, 0 #</div></div>
<div style="left:824px;top:286px;width:1px;height:18px;background:#c8c8c8"></div>
<div style="left:785px;top:286px;width:39px;height:17px;overflow:hidden"><div style="left:30px;top:3px;font-size:11px;line-height:13px;letter-spacing:-0.3px;color:#000;white-space:pre;">1</div></div>
<div style="left:845px;top:286px;width:1px;height:18px;background:#c8c8c8"></div>
<div style="left:825px;top:286px;width:20px;height:17px;overflow:hidden"><div style="left:0px;top:3px;font-size:11px;line-height:13px;letter-spacing:-0.3px;color:#000;white-space:pre;">KRT</div></div>
<div style="left:881px;top:286px;width:1px;height:18px;background:#c8c8c8"></div>
<div style="left:846px;top:286px;width:35px;height:17px;overflow:hidden"><div style="left:20px;top:3px;font-size:11px;line-height:13px;letter-spacing:0.0px;color:#000;white-space:pre;">12</div></div>
<div style="left:904px;top:286px;width:1px;height:18px;background:#c8c8c8"></div>
<div style="left:882px;top:286px;width:22px;height:17px;overflow:hidden"><div style="left:0px;top:3px;font-size:11px;line-height:13px;letter-spacing:-0.5px;color:#000;white-space:pre;">BOX</div></div>
<div style="left:938px;top:286px;width:1px;height:18px;background:#c8c8c8"></div>
<div style="left:905px;top:286px;width:33px;height:17px;overflow:hidden"><div style="left:24px;top:3px;font-size:11px;line-height:13px;letter-spacing:-0.3px;color:#000;white-space:pre;">1</div></div>
<div style="left:965px;top:286px;width:1px;height:18px;background:#c8c8c8"></div>
<div style="left:939px;top:286px;width:26px;height:17px;overflow:hidden"><div style="left:2px;top:3px;font-size:11px;line-height:13px;letter-spacing:0px;color:#000;white-space:pre;">#</div></div>
<div style="left:1006px;top:286px;width:1px;height:18px;background:#c8c8c8"></div>
<div style="left:966px;top:286px;width:40px;height:17px;overflow:hidden"><div style="left:31px;top:3px;font-size:11px;line-height:13px;letter-spacing:-0.3px;color:#000;white-space:pre;">0</div></div>
<div style="left:1033px;top:286px;width:1px;height:18px;background:#c8c8c8"></div>
<div style="left:1007px;top:286px;width:26px;height:17px;overflow:hidden"><div style="left:2px;top:3px;font-size:11px;line-height:13px;letter-spacing:0px;color:#000;white-space:pre;">#</div></div>
<div style="left:1205px;top:286px;width:1px;height:18px;background:#c8c8c8"></div>
<div style="left:1034px;top:286px;width:171px;height:17px;overflow:hidden"><div style="left:2px;top:3px;font-size:11px;line-height:13px;letter-spacing:0.091px;color:#000;white-space:pre;">1 KRT, 13 BOX, 0 #, 0 #</div></div>
<div style="left:1281px;top:286px;width:1px;height:18px;background:#c8c8c8"></div>
<div style="left:1206px;top:286px;width:75px;height:17px;overflow:hidden"><div style="left:32px;top:3px;font-size:11px;line-height:13px;letter-spacing:0.0px;color:#000;white-space:pre;">141,818</div></div>
<div style="left:1306px;top:286px;width:1px;height:18px;background:#c8c8c8"></div>
<div style="left:1282px;top:286px;width:24px;height:17px;overflow:hidden"><div style="left:0px;top:3px;font-size:11px;line-height:13px;letter-spacing:-1.0px;color:#000;white-space:pre;">KRT</div></div>
<div style="left:24px;top:304px;width:1313px;height:18px;background:#f0f0f0"></div>
<div style="left:24px;top:321px;width:1313px;height:1px;background:#c8c8c8"></div>
<div style="left:104px;top:304px;width:1px;height:18px;background:#c8c8c8"></div>
<div style="left:24px;top:304px;width:80px;height:17px;overflow:hidden"><div style="left:2px;top:3px;font-size:11px;line-height:13px;letter-spacing:-0.3px;color:#000;white-space:pre;">315760</div></div>
<div style="left:162px;top:304px;width:1px;height:18px;background:#c8c8c8"></div>
<div style="left:105px;top:304px;width:57px;height:17px;overflow:hidden"><div style="left:2px;top:3px;font-size:11px;line-height:13px;letter-spacing:-0.3px;color:#000;white-space:pre;">-</div></div>
<div style="left:414px;top:304px;width:1px;height:18px;background:#c8c8c8"></div>
<div style="left:163px;top:304px;width:251px;height:17px;overflow:hidden"><div style="left:0px;top:3px;font-size:11px;line-height:13px;letter-spacing:-0.758px;color:#000;white-space:pre;">DRINK BENG BENG CHOCOLATE 8RCGX10S</div></div>
<div style="left:610px;top:304px;width:1px;height:18px;background:#c8c8c8"></div>
<div style="left:415px;top:304px;width:195px;height:17px;overflow:hidden"><div style="left:2px;top:3px;font-size:11px;line-height:13px;letter-spacing:-0.208px;color:#000;white-space:pre;">10 KRT, 0 RCG, 0 SCH, 0 #</div></div>
<div style="left:784px;top:304px;width:1px;height:18px;background:#c8c8c8"></div>
<div style="left:611px;top:304px;width:173px;height:17px;overflow:hidden"><div style="left:7px;top:3px;font-size:11px;line-height:13px;letter-spacing:-0.217px;color:#000;white-space:pre;">0 KRT  0 RCG, 0 SCH, 0 #</div></div>
<div style="left:824px;top:304px;width:1px;height:18px;background:#c8c8c8"></div>
<div style="left:785px;top:304px;width:39px;height:17px;overflow:hidden"><div style="left:31px;top:3px;font-size:11px;line-height:13px;letter-spacing:-0.3px;color:#000;white-space:pre;">5</div></div>
<div style="left:845px;top:304px;width:1px;height:18px;background:#c8c8c8"></div>
<div style="left:825px;top:304px;width:20px;height:17px;overflow:hidden"><div style="left:0px;top:3px;font-size:11px;line-height:13px;letter-spacing:-0.3px;color:#000;white-space:pre;">KRT</div></div>
<div style="left:881px;top:304px;width:1px;height:18px;background:#c8c8c8"></div>
<div style="left:846px;top:304px;width:35px;height:17px;overflow:hidden"><div style="left:20px;top:3px;font-size:11px;line-height:13px;letter-spacing:0.0px;color:#000;white-space:pre;">12</div></div>
<div style="left:904px;top:304px;width:1px;height:18px;background:#c8c8c8"></div>
<div style="left:882px;top:304px;width:22px;height:17px;overflow:hidden"><div style="left:0px;top:3px;font-size:11px;line-height:13px;letter-spacing:-0.3px;color:#000;white-space:pre;">RCG</div></div>
<div style="left:938px;top:304px;width:1px;height:18px;background:#c8c8c8"></div>
<div style="left:905px;top:304px;width:33px;height:17px;overflow:hidden"><div style="left:25px;top:3px;font-size:11px;line-height:13px;letter-spacing:-0.3px;color:#000;white-space:pre;">2</div></div>
<div style="left:965px;top:304px;width:1px;height:18px;background:#c8c8c8"></div>
<div style="left:939px;top:304px;width:26px;height:17px;overflow:hidden"><div style="left:2px;top:3px;font-size:11px;line-height:13px;letter-spacing:-1.5px;color:#000;white-space:pre;">SCH</div></div>
<div style="left:1006px;top:304px;width:1px;height:18px;background:#c8c8c8"></div>
<div style="left:966px;top:304px;width:40px;height:17px;overflow:hidden"><div style="left:31px;top:3px;font-size:11px;line-height:13px;letter-spacing:-0.3px;color:#000;white-space:pre;">0</div></div>
<div style="left:1033px;top:304px;width:1px;height:18px;background:#c8c8c8"></div>
<div style="left:1007px;top:304px;width:26px;height:17px;overflow:hidden"><div style="left:2px;top:3px;font-size:11px;line-height:13px;letter-spacing:0px;color:#000;white-space:pre;">#</div></div>
<div style="left:1205px;top:304px;width:1px;height:18px;background:#c8c8c8"></div>
<div style="left:1034px;top:304px;width:171px;height:17px;overflow:hidden"><div style="left:2px;top:3px;font-size:11px;line-height:13px;letter-spacing:-0.174px;color:#000;white-space:pre;">6 KRT, 4 RCG, 2 SCH, 0 #</div></div>
<div style="left:1281px;top:304px;width:1px;height:18px;background:#c8c8c8"></div>
<div style="left:1206px;top:304px;width:75px;height:17px;overflow:hidden"><div style="left:32px;top:3px;font-size:11px;line-height:13px;letter-spacing:0.0px;color:#000;white-space:pre;">109,091</div></div>
<div style="left:1306px;top:304px;width:1px;height:18px;background:#c8c8c8"></div>
<div style="left:1282px;top:304px;width:24px;height:17px;overflow:hidden"><div style="left:0px;top:3px;font-size:11px;line-height:13px;letter-spacing:-1.0px;color:#000;white-space:pre;">KRT</div></div>
<div style="left:1337px;top:267px;width:1px;height:273px;background:#fafafa"></div>
<div style="left:1338px;top:267px;width:17px;height:273px;background:#f0f0f0"></div>
<div style="left:1338px;top:284px;width:15px;height:159px;background:#cdcdcd"></div>
<svg style="position:absolute;left:1341px;top:272px" width="9" height="8"><path d="M1 6.5 L4.5 2 L8 6.5" fill="none" stroke="#505050" stroke-width="2"/></svg>
<svg style="position:absolute;left:1341px;top:527px" width="9" height="8"><path d="M1 1.5 L4.5 5.5 L8 1.5" fill="none" stroke="#505050" stroke-width="2"/></svg>
<div style="left:12px;top:540px;width:1326px;height:16px;background:#f0f0f0"></div>
<div style="left:1337px;top:540px;width:18px;height:16px;background:#f0f0f0"></div>
<div style="left:29px;top:540px;width:17px;height:15px;background:#cdcdcd"></div>
<svg style="position:absolute;left:16px;top:543px" width="8" height="9"><path d="M6.5 1.5 L2.5 4.5 L6.5 7.5" fill="none" stroke="#505050" stroke-width="2"/></svg>
<svg style="position:absolute;left:1325px;top:543px" width="8" height="9"><path d="M1.5 1.5 L5.5 4.5 L1.5 7.5" fill="none" stroke="#505050" stroke-width="2"/></svg>
<div style="left:10px;top:556px;width:1347px;height:1px;background:#fff"></div>
<div style="left:11px;top:559px;width:1014px;height:119px;border-top:1px solid #a0a0a0;border-left:1px solid #a0a0a0;border-bottom:1px solid #a0a0a0;border-right:1px solid #fff;box-sizing:border-box"></div>
<div style="left:1027px;top:560px;width:328px;height:118px;border:1px solid #a0a0a0;box-sizing:border-box"></div>
<div style="left:1028px;top:561px;width:326px;height:1px;background:#fff"></div>
<div style="left:1028px;top:561px;width:1px;height:116px;background:#fafafa"></div>
<div style="left:1027px;top:678px;width:330px;height:1px;background:#fff"></div>
<div style="left:1355px;top:560px;width:1px;height:119px;background:#fff"></div>
<div style="left:1028px;top:566px;width:324px;height:109px;border:1px solid #a0a0a0;box-sizing:border-box"></div>
<div style="left:1029px;top:567px;width:322px;height:107px;border-top:1px solid #fff;border-left:1px solid #fff;box-sizing:border-box"></div>
<div style="left:1028px;top:675px;width:325px;height:1px;background:#fff"></div>
<div style="left:1352px;top:566px;width:1px;height:110px;background:#fff"></div>
<div style="left:1034px;top:562px;width:67px;height:10px;background:#f0f0f0"></div>
<div style="left:1036px;top:562px;font-size:11px;line-height:13px;letter-spacing:0.083px;color:#000;white-space:pre;">Total Tolakan</div>
<div style="left:1090px;top:576px;font-size:11px;line-height:13px;letter-spacing:0.25px;color:#000;white-space:pre;">Bruto</div>
<div style="left:1288px;top:576px;font-size:11px;line-height:13px;letter-spacing:0.0px;color:#000;white-space:pre;">930,455</div>
<div style="left:1090px;top:598px;font-size:11px;line-height:13px;letter-spacing:-0.3px;color:#000;white-space:pre;">Dsc. Global</div>
<div style="left:1090px;top:618px;font-size:11px;line-height:13px;letter-spacing:-0.167px;color:#000;white-space:pre;">PPN 10%</div>
<div style="left:1295px;top:618px;font-size:11px;line-height:13px;letter-spacing:-0.2px;color:#000;white-space:pre;">93,045</div>
<div style="left:1090px;top:635px;font-size:11px;line-height:13px;letter-spacing:-0.25px;color:#000;white-space:pre;">Biaya</div>
<div style="left:1322px;top:635px;font-size:11px;line-height:13px;letter-spacing:-0.3px;color:#000;white-space:pre;">0</div>
<div style="left:1090px;top:653px;font-size:11px;line-height:13px;letter-spacing:0.5px;color:#000;white-space:pre;">Netto</div>
<div style="left:1279px;top:653px;font-size:11px;line-height:13px;letter-spacing:0.0px;color:#000;white-space:pre;">1,023,500</div>
<div style="left:1244px;top:595px;width:85px;height:17px;background:#fff;border-top:1px solid #646464;border-left:1px solid #646464;border-right:1px solid #8c8c8c;border-bottom:1px solid #8c8c8c;box-sizing:border-box"></div>
<div style="left:1329px;top:595px;width:1px;height:18px;background:#fafafa"></div>
<div style="left:1244px;top:612px;width:85px;height:1px;background:#fafafa"></div>
<div style="left:200px;top:702px;width:1px;height:11px;background:#fff"></div>
<div style="left:1089px;top:695px;width:78px;height:25px;background:#f0f0f0;border-top:1px solid #fff;border-left:1px solid #fff;border-right:2px solid #6d6d6d;border-bottom:2px solid #6d6d6d;box-sizing:border-box"></div>
<div style="left:1192px;top:695px;width:75px;height:25px;background:#f0f0f0;border-top:1px solid #fff;border-left:1px solid #fff;border-right:2px solid #6d6d6d;border-bottom:2px solid #6d6d6d;box-sizing:border-box"></div>
<div style="left:1271px;top:695px;width:75px;height:25px;background:#f0f0f0;border-top:1px solid #fff;border-left:1px solid #fff;border-right:2px solid #6d6d6d;border-bottom:2px solid #6d6d6d;box-sizing:border-box"></div>
<svg style="position:absolute;left:1104px;top:697px" width="22" height="22" viewBox="0 0 22 22" shape-rendering="crispEdges">
<rect x="5" y="2" width="8" height="10" fill="#fff"/><rect x="2" y="10" width="18" height="10" fill="#fff"/>
<rect x="6" y="3" width="6" height="1" fill="#000"/><rect x="6" y="3" width="1" height="8" fill="#000"/><rect x="7" y="4" width="5" height="7" fill="#fff"/>
<rect x="12" y="4" width="1" height="1" fill="#000"/><rect x="13" y="5" width="1" height="1" fill="#000"/><rect x="14" y="6" width="1" height="1" fill="#000"/><rect x="15" y="7" width="1" height="4" fill="#000"/>
<rect x="12" y="5" width="2" height="2" fill="#000"/><rect x="12" y="5" width="1" height="1" fill="#fff"/>
<rect x="8" y="5" width="2" height="1" fill="#000"/><rect x="8" y="7" width="2" height="1" fill="#000"/><rect x="8" y="9" width="4" height="1" fill="#000"/><rect x="13" y="9" width="1" height="1" fill="#000"/>
<rect x="3" y="11" width="16" height="1" fill="#000"/><rect x="3" y="11" width="1" height="7" fill="#000"/><rect x="18" y="11" width="1" height="7" fill="#000"/>
<rect x="4" y="12" width="14" height="3" fill="#fff"/>
<rect x="5" y="13" width="1" height="1" fill="#9a9a9a"/><rect x="7" y="13" width="1" height="1" fill="#9a9a9a"/><rect x="9" y="13" width="1" height="1" fill="#9a9a9a"/><rect x="11" y="13" width="1" height="1" fill="#9a9a9a"/><rect x="13" y="13" width="1" height="1" fill="#9a9a9a"/><rect x="15" y="13" width="1" height="1" fill="#9a9a9a"/>
<rect x="16" y="13" width="1" height="1" fill="#ff0000"/>
<rect x="3" y="15" width="16" height="1" fill="#000"/><rect x="4" y="16" width="14" height="2" fill="#cfcfcf"/><rect x="4" y="18" width="14" height="1" fill="#000"/>
</svg>
<div style="left:1126px;top:702px;font-size:11px;line-height:13px;letter-spacing:0.25px;color:#000;white-space:pre;">Print</div>
<div style="left:1127px;top:713px;width:8px;height:1px;background:#000"></div>
<svg style="position:absolute;left:1205px;top:697px" width="22" height="22" viewBox="0 0 22 22"><path d="M2.8 10.4 L5 9.8 L8.3 12.6 C10.5 8.8 13.5 5.8 17.2 3.8 L19.2 4.1 C15.2 7.5 12 11.6 9.4 16.6 L8.4 17 Z" fill="#ff0000"/><path d="M19.2 4.3 C15.2 7.7 12 11.8 9.4 16.8" fill="none" stroke="#000" stroke-width="1" stroke-dasharray="1.2 0.6"/><path d="M4.5 10.2 L7.6 12" fill="none" stroke="#000" stroke-width="0.9" stroke-dasharray="1 0.8"/></svg>
<div style="left:1228px;top:702px;font-size:11px;line-height:13px;letter-spacing:-0.333px;color:#000;white-space:pre;">Save</div>
<div style="left:1228px;top:713px;width:7px;height:1px;background:#000"></div>
<svg style="position:absolute;left:1279px;top:697px" width="22" height="22" viewBox="0 0 22 22"><circle cx="11.5" cy="10.4" r="7.1" fill="#f4f4f4" stroke="#8e8e8e" stroke-width="1.4"/><path d="M11.5 5 L12.6 7 L12.4 10.5 L11.5 11.6 L10.4 10.5 L10.5 7 Z" fill="#8e8e8e"/><path d="M14.3 6.3 L15.8 7 L14.6 8.8 Z" fill="#8e8e8e"/><path d="M7.6 14.2 L10.6 11.4 M10.8 13 L12.4 14.6" fill="none" stroke="#8e8e8e" stroke-width="1.6"/></svg>
<div style="left:1302px;top:702px;font-size:11px;line-height:13px;letter-spacing:-0.2px;color:#a0a0a0;white-space:pre;">Cancel</div>
<div style="left:1302px;top:713px;width:7px;height:1px;background:#a0a0a0"></div>
</body></html>
